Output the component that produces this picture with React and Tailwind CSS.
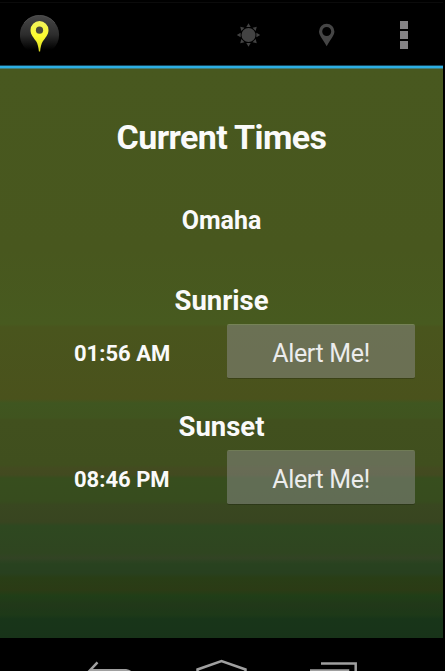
function ActionBar() {
  return (
    <header className="flex h-[69px] flex-col bg-black">
      <div className="h-[3px] w-[443px] border-b border-[#0b0b0b]" />
      <div className="flex h-[62px] items-start">
        <svg className="ml-5 mt-3 h-[40px] w-[40px]" viewBox="0 0 40 40">
          <defs>
            <linearGradient id="orb" x1="0" y1="0" x2="0" y2="1">
              <stop offset="0" stopColor="#484848" />
              <stop offset="0.5" stopColor="#2c2c2c" />
              <stop offset="0.88" stopColor="#000" />
            </linearGradient>
            <linearGradient id="pin" x1="0" y1="0" x2="0" y2="1">
              <stop offset="0" stopColor="#f4f45c" />
              <stop offset="0.5" stopColor="#fbfb30" />
              <stop offset="1" stopColor="#d8d820" />
            </linearGradient>
          </defs>
          <circle cx="19.5" cy="19.8" r="19.6" fill="url(#orb)" />
          <path d="M4 8A19.5 19.5 0 0 1 35 8" fill="none" stroke="#666" strokeOpacity="0.5" />
          <path
            d="M19.5 6a9 9 0 0 1 9 9c0 5-3.4 7.8-5.8 11.6-1.5 2.6-2.2 5.800-2.6 10h-1.200c-.4-4.200-1.100-7.400-2.600-10-2.400-3.800-5.800-6.600-5.800-11.600a9 9 0 0 1 9-9Z"
            fill="url(#pin)"
          />
          <circle cx="19.5" cy="15.2" r="3.6" fill="#4b4b3c" />
        </svg>
        <svg className="ml-[176px] mt-5 h-[24px] w-[25px]" viewBox="-12.500 -12 25 24" fill="#434343">
          <circle r="7" />
          {[0, 45, 90, 135, 180, 225, 270, 315].map((a) => (
            <path key={a} d="M-2.200-7.900L0-11.700L2.200-7.900Z" transform={`rotate(${a})`} />
          ))}
        </svg>
        <svg className="ml-[57px] mt-[20px] h-[24px] w-[18px]" viewBox="0 0 18 24">
          <path
            fillRule="evenodd"
            fill="#454545"
            d="M8.700.8a7.700 7.700 0 0 1 7.700 7.700c0 4-3.900 7.600-7.700 14.700C4.900 16.100 1 12.500 1 8.500A7.700 7.700 0 0 1 8.700.8Zm0 3.200a4.500 4.500 0 1 0 0 9 4.500 4.500 0 0 0 0-9Z"
          />
        </svg>
        <div className="ml-[64px] mt-[18px] flex flex-col gap-[2px]">
          <i className="h-[8px] w-[8px] bg-[#858385]" />
          <i className="h-[8px] w-[8px] bg-[#858385]" />
          <i className="h-[8px] w-[8px] bg-[#858385]" />
        </div>
      </div>
      <div className="h-[4px] w-[443px] border-b border-t border-b-[#3f7f79] border-t-[#15465a] bg-[#2daee2]" />
    </header>
  );
}

function TimeRow({ time }) {
  return (
    <div className="flex h-[55px] items-center">
      <div className="w-[227px] pl-[74px] pt-[5px] text-[22px] font-bold leading-none whitespace-nowrap">{time}</div>
      <button className="h-[55px] w-[188px] rounded-[2px] border-b border-t border-b-black/20 border-t-white/25 bg-[#919191]/48 bg-clip-padding pt-[3px] text-[25px] leading-none tracking-[-0.35px] text-[#ececec]">
        Alert Me!
      </button>
    </div>
  );
}

export default function App() {
  return (
    <div className="h-[671px] w-[445px] overflow-hidden bg-black font-['Roboto',sans-serif] text-[#fafafa]">
      <ActionBar />
      <main className="flex h-[569px] w-[443px] flex-col bg-[linear-gradient(#48581f_0px,#48571e_180px,#475a1f_255px,#49551d_258px,#4a521c_330px,#3f5620_334px,#40541f_349px,#41501e_351px,#404f1e_396px,#434b20_399px,#424a20_406px,#374e1e_409px,#374c1e_432px,#394720_436px,#384520_453px,#2e4820_457px,#2f4520_484px,#324324_489px,#28421f_495px,#28401f_504px,#293e16_509px,#2b3b15_521px,#203e17_527px,#213819_536px,#1d3918_546px,#183519_550px,#183319_569px)]">
        <h1 className="mt-[47px] h-[42px] text-center text-[34px] font-bold leading-[42px] tracking-[-0.6px]">Current Times</h1>
        <p className="mt-[47px] h-[32px] text-center text-[25px] font-bold leading-[32px]">Omaha</p>
        <h2 className="mt-[47px] h-[34px] text-center text-[27.500px] font-bold leading-[34px]">Sunrise</h2>
        <div className="mt-[6px]"><TimeRow time="01:56 AM" /></div>
        <h2 className="mt-[31px] h-[34px] text-center text-[27.500px] font-bold leading-[34px]">Sunset</h2>
        <div className="mt-[6px]"><TimeRow time="08:46 PM" /></div>
      </main>
      <svg className="h-[33px] w-[445px]" viewBox="0 638 445 33" fill="none" stroke="#a0a0a0" strokeWidth="2.500">
        <path d="M97.500 662.300L87.500 673M91 670.200H126Q130 670.500 132 674" />
        <path d="M197.500 674V669.500L221.500 661L245.500 669.500V674" />
        <path d="M321 663.500H355.700V674M310 670.500H348V674" />
      </svg>
    </div>
  );
}
